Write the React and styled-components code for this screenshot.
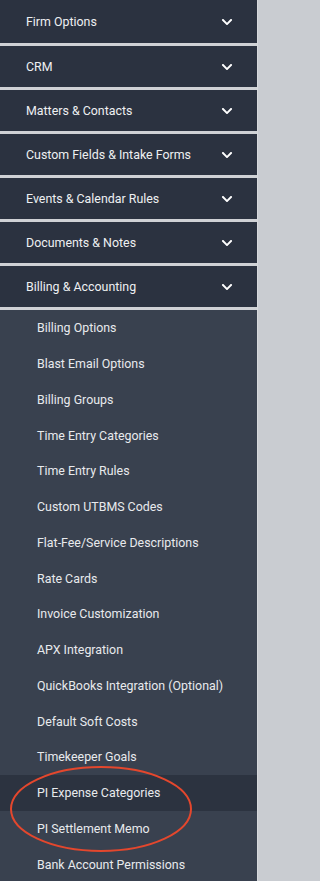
import React from 'react';
import styled, { createGlobalStyle } from 'styled-components';
import { FaChevronDown } from 'react-icons/fa';

const GlobalStyle = createGlobalStyle`
  body {
    margin: 0;
    background: #c9ccd1;
    font-family: Roboto, "Liberation Sans", Arial, sans-serif;
  }
`;

const Sidebar = styled.nav`
  width: 257px;
  border-right: 1px solid #d6d8db;
  border-bottom: 2px solid #d6d8db;
  background: #39414f;
`;

const Header = styled.div`
  display: flex;
  align-items: center;
  justify-content: space-between;
  height: 41px;
  padding: 0 24px 0 26px;
  background: #2b3240;
  color: #eef0f2;
  font-size: 12.4px;
  border-bottom: 3px solid #cfd1d5;

  &:first-child {
    height: 43px;
  }

  svg {
    font-size: 12px;
    color: #ffffff;
  }
`;

const SubList = styled.div`
  position: relative;
`;

const SubItem = styled.div`
  display: flex;
  align-items: center;
  height: 35.75px;
  padding-left: 37px;
  color: #e8eaed;
  font-size: 12.4px;
  background: ${p => (p.$active ? '#2c3340' : 'transparent')};
`;

const Ring = styled.svg`
  position: absolute;
  left: 8px;
  top: 454px;
  pointer-events: none;
`;

const sections = [
  'Firm Options',
  'CRM',
  'Matters & Contacts',
  'Custom Fields & Intake Forms',
  'Events & Calendar Rules',
  'Documents & Notes',
  'Billing & Accounting',
];

const billingItems = [
  'Billing Options',
  'Blast Email Options',
  'Billing Groups',
  'Time Entry Categories',
  'Time Entry Rules',
  'Custom UTBMS Codes',
  'Flat-Fee/Service Descriptions',
  'Rate Cards',
  'Invoice Customization',
  'APX Integration',
  'QuickBooks Integration (Optional)',
  'Default Soft Costs',
  'Timekeeper Goals',
  'PI Expense Categories',
  'PI Settlement Memo',
  'Bank Account Permissions',
];

export default function App() {
  return (
    <>
      <GlobalStyle />
      <Sidebar>
        {sections.map(s => (
          <Header key={s}>
            <span>{s}</span>
            <FaChevronDown />
          </Header>
        ))}
        <SubList>
          {billingItems.map(item => (
            <SubItem key={item} $active={item === 'PI Expense Categories'}>
              {item}
            </SubItem>
          ))}
          <Ring width="186" height="90" viewBox="0 0 186 90">
            <ellipse cx="93" cy="45" rx="90" ry="42" fill="none" stroke="#e4472d" strokeWidth="2" />
          </Ring>
        </SubList>
      </Sidebar>
    </>
  );
}
